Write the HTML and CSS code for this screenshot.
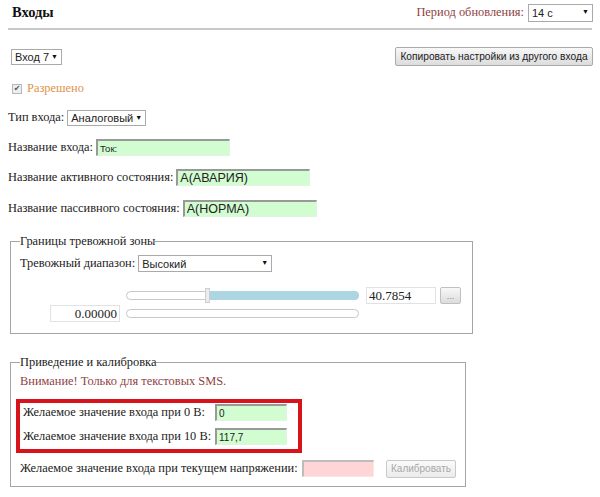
FILE: index.html
```html
<!DOCTYPE html>
<html lang="ru">
<head>
    <meta charset="UTF-8">
    <title>Входы</title>
    <link rel="stylesheet" href="styles.css">
</head>
<body>
    <div class="header">
        <h1>Входы</h1>
        <div class="period">
            <span>Период обновления:</span>
            <span class="select sel-period">14 с</span>
        </div>
    </div>

    <div class="toolbar">
        <span class="select sel-input">Вход 7</span>
        <button class="btn copy">Копировать настройки из другого входа</button>
    </div>

    <div class="row enabled">
        <span class="check">&#10004;</span>
        <span>Разрешено</span>
    </div>

    <div class="row type-row">
        Тип входа:
        <span class="select sel-type">Аналоговый</span>
    </div>
    <div class="row name-row">
        Название входа:
        <input type="text" class="txt small" value="Ток:">
    </div>
    <div class="row active-row">
        Название активного состояния:
        <input type="text" class="txt" value="А(АВАРИЯ)">
    </div>
    <div class="row passive-row">
        Название пассивного состояния:
        <input type="text" class="txt" value="А(НОРМА)">
    </div>

    <fieldset class="zone">
        <legend>Границы тревожной зоны</legend>
        <div class="zone-row">
            Тревожный диапазон:
            <span class="select sel-range">Высокий</span>
        </div>
        <div class="slider-row">
            <div class="spacer"></div>
            <div class="track">
                <div class="fill" style="width: 65%;"></div>
                <div class="handle" style="left: 35%;"></div>
            </div>
            <input type="text" class="num" value="40.7854">
            <button class="btn dots">...</button>
        </div>
        <div class="slider-row second">
            <input type="text" class="num right" value="0.00000">
            <div class="track"></div>
        </div>
    </fieldset>

    <fieldset class="calib">
        <legend>Приведение и калибровка</legend>
        <div class="warn">Внимание! Только для текстовых SMS.</div>
        <div class="highlight">
            <div class="calib-row">
                <span class="clabel">Желаемое значение входа при 0 В:</span>
                <input type="text" class="txt val" value="0">
            </div>
            <div class="calib-row">
                <span class="clabel">Желаемое значение входа при 10 В:</span>
                <input type="text" class="txt val" value="117,7">
            </div>
        </div>
        <div class="calib-row current">
            <span class="cur-label">Желаемое значение входа при текущем напряжении:</span>
            <input type="text" class="txt val pink" value="">
            <button class="btn calibrate" disabled>Калибровать</button>
        </div>
    </fieldset>
</body>
</html>
```

FILE: styles.css
```css
body {
    margin: 0;
    padding: 0 0 0 8px;
    font-family: "Liberation Serif", "Times New Roman", serif;
    font-size: 12.4px;
    color: #222;
    background: #fff;
    white-space: nowrap;
}
.header {
    display: flex;
    justify-content: space-between;
    align-items: center;
    width: 584px;
    border-bottom: 2px solid #c8c8c8;
    padding-left: 4px;
    box-sizing: border-box;
    height: 30px;
}
h1 {
    margin: 0 0 3px 0;
    font-size: 14.5px;
    font-weight: bold;
    color: #111;
}
.period {
    display: flex;
    align-items: center;
    gap: 4px;
    margin: 0 -1px 3px 0;
    color: #8f3f3f;
}
input, button, .select {
    font-family: "Liberation Sans", Arial, sans-serif;
    color: #222;
    box-sizing: border-box;
}
.select {
    position: relative;
    display: inline-flex;
    align-items: center;
    height: 16px;
    border: 1px solid #aaa;
    background: #fff;
    padding: 0 12px 0 3px;
    font-size: 11px;
}
.select::after {
    content: "\25BC";
    position: absolute;
    right: 3px;
    top: 3px;
    font-size: 7px;
    color: #111;
}
.sel-period {
    width: 65px;
    height: 18px;
}
.toolbar {
    display: flex;
    justify-content: space-between;
    align-items: center;
    width: 585px;
    margin-top: 17px;
    padding-left: 3px;
    box-sizing: border-box;
    height: 19px;
}
.sel-input {
    width: 51px;
}
.btn {
    height: 19px;
    padding: 0;
    border: 1px solid #aaa;
    border-radius: 2px;
    background: linear-gradient(#f8f8f8, #dcdcdc);
}
.copy {
    width: 198px;
    font-size: 10.2px;
}
.btn:disabled {
    color: #a8a8a8;
    border-color: #c8c8c8;
    background: linear-gradient(#fafafa, #ebebeb);
}
.row {
    display: flex;
    align-items: center;
    gap: 3px;
    height: 17px;
}
.enabled {
    margin-top: 14px;
    padding-left: 4px;
    color: #e0934a;
    gap: 5px;
}
.check {
    display: inline-flex;
    align-items: center;
    justify-content: center;
    width: 10px;
    height: 10px;
    box-sizing: border-box;
    border: 1px solid #b8b8b8;
    background: #eee;
    color: #555;
    font-family: "DejaVu Sans", sans-serif;
    font-size: 8px;
}
.type-row {
    margin-top: 12px;
}
.name-row, .active-row {
    margin-top: 13px;
}
.passive-row {
    margin-top: 14px;
}
.txt {
    height: 17px;
    border: 1px solid #e3f3e3;
    border-top: 2px solid #999;
    border-left: 2px solid #999;
    background: #d1fdd1;
    padding: 0 2px;
    width: 134px;
    font-size: 12.5px;
    flex-shrink: 0;
}
.txt.small {
    font-size: 9.5px;
}
fieldset {
    border: 1px solid #a5a5a5;
    box-sizing: border-box;
    min-width: 0;
}
legend {
    padding: 0;
    height: 15px;
    line-height: 15px;
}
.zone {
    width: 463px;
    margin: 17px 0 0 2px;
    padding: 0 9px 11px 9px;
}
.zone-row {
    display: flex;
    align-items: center;
    gap: 3px;
    height: 17px;
    margin-top: 6px;
}
.sel-range {
    width: 134px;
    height: 17px;
}
.slider-row {
    display: flex;
    align-items: center;
    gap: 7px;
    height: 17px;
    margin-top: 15px;
}
.slider-row.second {
    margin-top: 1px;
    padding-left: 30px;
    gap: 6px;
}
.spacer {
    width: 99px;
}
.track {
    position: relative;
    width: 233px;
    height: 9px;
    border: 1px solid #c8c8c8;
    border-radius: 5px;
    background: #fff;
    box-sizing: border-box;
}
.fill {
    position: absolute;
    right: -1px;
    top: -1px;
    bottom: -1px;
    background: #acd6e2;
    border-radius: 0 5px 5px 0;
}
.handle {
    position: absolute;
    top: -4px;
    width: 5px;
    height: 15px;
    margin-left: -3px;
    box-sizing: border-box;
    background: #ececec;
    border: 1px solid #cfcfcf;
}
.num {
    width: 70px;
    height: 17px;
    border: 1px solid #e2e2e2;
    font-family: "Liberation Serif", "Times New Roman", serif;
    font-size: 13px;
    padding: 0 2px;
}
.num.right {
    text-align: right;
}
.dots {
    width: 21px;
    height: 17px;
    margin-left: -3px;
    color: #888;
    font-size: 9px;
    border-color: #c0c0c0;
}
.calib {
    width: 456px;
    margin: 21px 0 0 2px;
    padding: 0 9px 9px 9px;
}
.warn {
    color: #8f3f3f;
    height: 15px;
    line-height: 15px;
    margin-top: 4px;
}
.highlight {
    margin: 10px 0 0 -4px;
    width: 286px;
    box-sizing: border-box;
    border: 4px solid #d7141b;
    padding: 1px 3px 4px 3px;
}
.calib-row {
    display: flex;
    align-items: center;
    height: 17px;
}
.calib-row + .calib-row {
    margin-top: 7px;
}
.clabel {
    width: 192px;
}
.val {
    width: 72px;
    font-size: 10px;
}
.current {
    margin-top: 7px;
}
.cur-label {
    width: 282px;
}
.pink {
    background: #ffd5d5;
    border-color: #fde6e6;
    border-top-color: #bdbdbd;
    border-left-color: #bdbdbd;
}
.calibrate {
    margin-left: 12px;
    width: 70px;
    height: 18px;
    font-size: 10px;
    flex-shrink: 0;
}
```
